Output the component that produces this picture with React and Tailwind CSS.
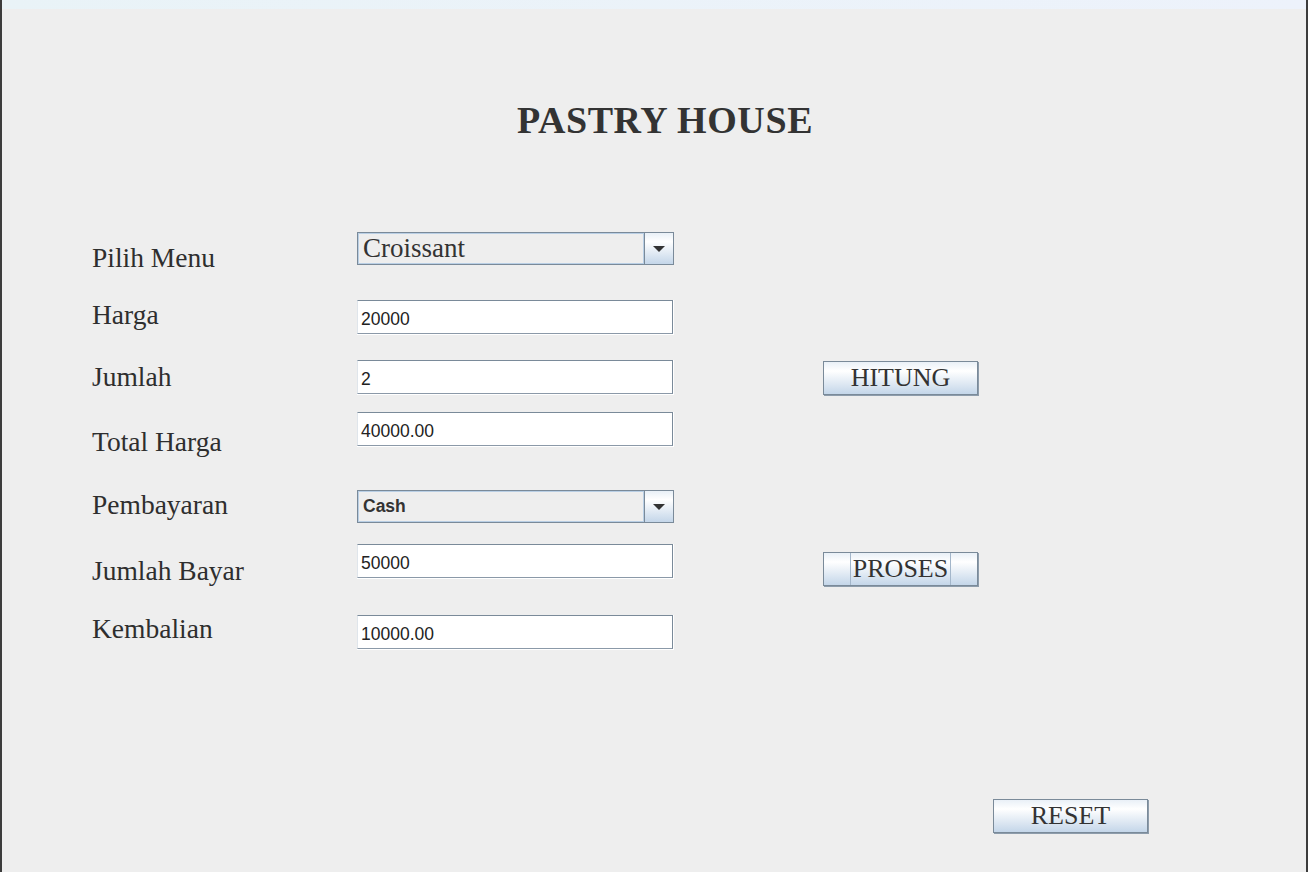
import React from "react";

const serif = "font-['Liberation_Serif','Times_New_Roman',serif]";
const sans = "font-['Liberation_Sans',Arial,sans-serif]";
const btnBg =
  "bg-[linear-gradient(to_bottom,#e9f0f7_0%,#ffffff_28%,#c4d6e9_100%)]";

function Label({ text, mt }) {
  return (
    <div
      className={`${serif} h-[27px] text-[27.5px] leading-[27px] text-[#2e2e2e] whitespace-nowrap ${mt}`}
    >
      {text}
    </div>
  );
}

function Field({ value, mt }) {
  return (
    <div className={`w-[317px] h-[35px] bg-white ${mt}`}>
      <div
        className={`${sans} w-[316px] h-[34px] bg-white border-t border-r border-b border-l border-t-[#7a8a99] border-r-[#7a8a99] border-b-[#8b99a8] border-l-[#dfe5eb] flex items-end pb-[5px] pl-[3px] text-[17.5px] leading-[17px] text-[#222222]`}
      >
        {value}
      </div>
    </div>
  );
}

function Combo({ value, mt, bold }) {
  return (
    <div
      className={`flex w-[317px] h-[33px] border border-[#7a8a99] bg-[#eeeeee] ${mt}`}
    >
      <div className="flex-1 border border-[#b9cfe5] flex items-center pl-[4px]">
        {bold ? (
          <span
            className={`${sans} font-bold text-[17.5px] leading-[17px] text-[#333333]`}
          >
            {value}
          </span>
        ) : (
          <span
            className={`${serif} text-[27px] leading-[27px] text-[#333333]`}
          >
            {value}
          </span>
        )}
      </div>
      <div
        className={`w-[29px] border-l border-[#7a8a99] ${btnBg} flex items-center justify-center`}
      >
        <div className="w-0 h-0 border-l-[6px] border-r-[6px] border-t-[6px] border-l-transparent border-r-transparent border-t-[#333333]" />
      </div>
    </div>
  );
}

function Button({ text, mt, split }) {
  return (
    <div
      className={`w-[155px] h-[34px] border border-[#7a8a99] shadow-[1px_1px_0_#8d9cab] ${btnBg} flex ${mt}`}
    >
      {split ? (
        <>
          <div className="w-[26px]" />
          <div
            className={`flex-1 border-l border-r border-[#a3b6ca] flex items-center justify-center ${serif} text-[26px] leading-[26px] text-[#333333]`}
          >
            {text}
          </div>
          <div className="w-[26px]" />
        </>
      ) : (
        <div
          className={`flex-1 flex items-center justify-center ${serif} text-[26px] leading-[26px] text-[#333333]`}
        >
          {text}
        </div>
      )}
    </div>
  );
}

export default function App() {
  return (
    <div className="w-[1308px] h-[872px] bg-[#eeeeee] border-l-2 border-r-2 border-[#3c3c3c] flex flex-col overflow-hidden">
      <div className="h-[9px] shrink-0 bg-[linear-gradient(to_right,#e9f3f7,#edf2fb)]" />
      <h1
        className={`${serif} mt-[92px] pl-[22px] text-center text-[38px] leading-[38px] tracking-[0.6px] font-bold text-[#333333]`}
      >
        PASTRY HOUSE
      </h1>

      <div className="mt-[93px] flex pl-[90px]">
        <div className="w-[265px] flex flex-col">
          <Label text="Pilih Menu" mt="mt-[12px]" />
          <Label text="Harga" mt="mt-[30px]" />
          <Label text="Jumlah" mt="mt-[35px]" />
          <Label text="Total Harga" mt="mt-[38px]" />
          <Label text="Pembayaran" mt="mt-[36px]" />
          <Label text="Jumlah Bayar" mt="mt-[39px]" />
          <Label text="Kembalian" mt="mt-[31px]" />
        </div>
        <div className="w-[317px] flex flex-col">
          <Combo value="Croissant" mt="mt-0" />
          <Field value="20000" mt="mt-[35px]" />
          <Field value="2" mt="mt-[25px]" />
          <Field value="40000.00" mt="mt-[17px]" />
          <Combo value="Cash" bold mt="mt-[43px]" />
          <Field value="50000" mt="mt-[21px]" />
          <Field value="10000.00" mt="mt-[36px]" />
        </div>
        <div className="ml-[149px] flex flex-col">
          <Button text="HITUNG" mt="mt-[129px]" />
          <Button text="PROSES" split mt="mt-[157px]" />
        </div>
      </div>

      <div className="mt-auto mb-[39px] pl-[991px]">
        <Button text="RESET" mt="mt-0" />
      </div>
    </div>
  );
}
